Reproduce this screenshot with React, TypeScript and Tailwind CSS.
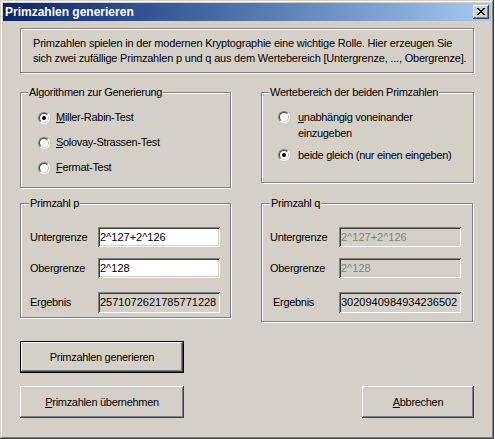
import React from "react";

const bevelRaised =
  "shadow-[inset_-1px_-1px_0_#404040,inset_1px_1px_0_#fff,inset_-2px_-2px_0_#808080,inset_2px_2px_0_#d4d0c8]";
const sunken =
  "shadow-[inset_1px_1px_0_#808080,inset_-1px_-1px_0_#fff,inset_2px_2px_0_#404040,inset_-2px_-2px_0_#d4d0c8]";
const etched = "border border-[#808080] shadow-[inset_1px_1px_0_#fff,1px_1px_0_#fff]";

function Radio({ checked }: { checked?: boolean }) {
  return (
    <span className="relative inline-block w-[12px] h-[12px] shrink-0 rounded-full border border-t-[#808080] border-l-[#808080] border-r-white border-b-white">
      <span className="absolute inset-0 rounded-full border border-t-[#404040] border-l-[#404040] border-r-[#d4d0c8] border-b-[#d4d0c8] bg-white flex items-center justify-center">
        {checked && <span className="w-[4px] h-[4px] rounded-full bg-black" />}
      </span>
    </span>
  );
}

function Group({
  label,
  className,
  labelLeft,
  children,
}: {
  label: string;
  className: string;
  labelLeft: string;
  children?: React.ReactNode;
}) {
  return (
    <div className={`relative ${etched} ${className}`}>
      <span
        className={`absolute top-[-7px] ${labelLeft} px-[1px] bg-[#d4d0c8] leading-[13px] tracking-[-0.3px]`}
      >
        {label}
      </span>
      {children}
    </div>
  );
}

function Field({
  value,
  disabled,
  readOnly,
  h,
}: {
  value: string;
  disabled?: boolean;
  readOnly?: boolean;
  h: string;
}) {
  const bg = disabled || readOnly ? "bg-[#d4d0c8]" : "bg-white";
  const color = disabled ? "text-[#808080]" : "text-black";
  return (
    <div
      className={`w-[122px] ${h} ${bg} ${color} ${sunken} flex items-center pl-[2px] pr-[2px] overflow-hidden whitespace-nowrap leading-[13px]`}
    >
      {value}
    </div>
  );
}

function Row({
  label,
  labelW,
  labelClass,
  children,
}: {
  label: string;
  labelW: string;
  labelClass?: string;
  children: React.ReactNode;
}) {
  return (
    <div className="flex items-center">
      <span className={`${labelW} shrink-0 tracking-[-0.3px] ${labelClass ?? ""}`}>{label}</span>
      {children}
    </div>
  );
}

function CloseGlyph() {
  const rows = [
    [0, 1, 6, 7],
    [1, 2, 5, 6],
    [2, 3, 4, 5],
    [3, 4],
    [2, 3, 4, 5],
    [1, 2, 5, 6],
    [0, 1, 6, 7],
  ];
  return (
    <svg width="8" height="7" viewBox="0 0 8 7" shapeRendering="crispEdges">
      {rows.map((cols, y) =>
        cols.map((x) => <rect key={`${x}-${y}`} x={x} y={y} width="1" height="1" fill="#000" />)
      )}
    </svg>
  );
}

export default function App() {
  return (
    <div
      className="w-[494px] h-[439px] bg-[#d4d0c8] text-black text-[11px] shadow-[inset_-1px_-1px_0_#404040,inset_1px_1px_0_#d4d0c8,inset_-2px_-2px_0_#808080,inset_2px_2px_0_#fff] flex flex-col"
      style={{ fontFamily: '"Liberation Sans", Arial, sans-serif' }}
    >
      {/* Title bar */}
      <div className="mx-[3px] mt-[3px] h-[18px] flex items-center justify-between bg-gradient-to-r from-[#0a246a] to-[#a6caf0]">
        <span className="pl-[2px] text-white font-bold text-[12px] leading-[18px]">
          Primzahlen generieren
        </span>
        <div
          className={`mr-[2px] w-[16px] h-[14px] bg-[#d4d0c8] flex items-center justify-center ${bevelRaised}`}
        >
          <span className="mt-[-1px] flex">
            <CloseGlyph />
          </span>
        </div>
      </div>

      {/* Content */}
      <div className="pl-[20px] pt-[7px] flex flex-col">
        <div className={`w-[454px] h-[45px] ${etched} pl-[12px] pt-[7px] leading-[15px] tracking-[-0.2px]`}>
          <div>Primzahlen spielen in der modernen Kryptographie eine wichtige Rolle. Hier erzeugen Sie</div>
          <div>sich zwei zufällige Primzahlen p und q aus dem Wertebereich [Untergrenze, ..., Obergrenze].</div>
        </div>

        <div className="mt-[19px] flex items-start gap-[30px]">
          <Group label="Algorithmen zur Generierung" className="w-[211px] h-[96px]" labelLeft="left-[7px]">
            <div className="pt-[12px] pl-[17px] flex flex-col">
              <div className="h-[25px] flex items-center gap-[6px]">
                <Radio checked />
                <span className="tracking-[-0.3px]">
                  <span className="underline">M</span>iller-Rabin-Test
                </span>
              </div>
              <div className="h-[25px] flex items-center gap-[6px]">
                <Radio />
                <span className="tracking-[-0.3px]">
                  <span className="underline">S</span>olovay-Strassen-Test
                </span>
              </div>
              <div className="h-[25px] flex items-center gap-[6px]">
                <Radio />
                <span className="tracking-[-0.3px]">
                  <span className="underline">F</span>ermat-Test
                </span>
              </div>
            </div>
          </Group>

          <Group label="Wertebereich der beiden Primzahlen" className="w-[213px] h-[91px]" labelLeft="left-[7px]">
            <div className="pt-[16px] pl-[16px] flex flex-col">
              <div className="flex items-start gap-[8px]">
                <span className="mt-[2px] flex">
                  <Radio />
                </span>
                <span className="leading-[16px] tracking-[-0.3px]">
                  <span className="underline">u</span>nabhängig voneinander
                  <br />
                  einzugeben
                </span>
              </div>
              <div className="mt-[6px] flex items-start gap-[8px]">
                <span className="mt-[2px] flex">
                  <Radio checked />
                </span>
                <span className="leading-[16px] tracking-[-0.3px]">beide gleich (nur einen eingeben)</span>
              </div>
            </div>
          </Group>
        </div>

        <div className="mt-[15px] flex items-start gap-[30px]">
          <Group label="Primzahl p" className="w-[211px] h-[115px]" labelLeft="left-[8px]">
            <div className="pt-[23px] pl-[9px] flex flex-col">
              <Row label="Untergrenze" labelW="w-[68px]">
                <Field value="2^127+2^126" h="h-[20px]" />
              </Row>
              <div className="mt-[11px]">
                <Row label="Obergrenze" labelW="w-[68px]">
                  <Field value="2^128" h="h-[20px]" />
                </Row>
              </div>
              <div className="mt-[14px]">
                <Row label="Ergebnis" labelW="w-[68px]">
                  <Field value="2571072621785771228" readOnly h="h-[21px]" />
                </Row>
              </div>
            </div>
          </Group>

          <Group label="Primzahl q" className="w-[212px] h-[119px]" labelLeft="left-[8px]">
            <div className="pt-[23px] pl-[8px] flex flex-col">
              <Row label="Untergrenze" labelW="w-[69px]">
                <Field value="2^127+2^126" disabled h="h-[20px]" />
              </Row>
              <div className="mt-[11px]">
                <Row label="Obergrenze" labelW="w-[69px]">
                  <Field value="2^128" disabled h="h-[20px]" />
                </Row>
              </div>
              <div className="mt-[14px]">
                <Row label="Ergebnis" labelW="w-[69px]" labelClass="pl-[3px]">
                  <Field value="3020940984934236502" readOnly h="h-[21px]" />
                </Row>
              </div>
            </div>
          </Group>
        </div>

        <div className="mt-[19px] w-[164px] h-[32px] border border-black">
          <div className={`w-full h-full flex items-center justify-center ${bevelRaised} tracking-[-0.3px]`}>
            <span>
              Primzahlen <span className="underline">g</span>enerieren
            </span>
          </div>
        </div>

        <div className="mt-[13px] w-[454px] flex justify-between">
          <div className={`w-[164px] h-[32px] flex items-center justify-center ${bevelRaised} tracking-[-0.3px]`}>
            <span>
              <span className="underline">P</span>rimzahlen übernehmen
            </span>
          </div>
          <div className={`w-[112px] h-[32px] flex items-center justify-center ${bevelRaised} tracking-[-0.3px]`}>
            <span>
              <span className="underline">A</span>bbrechen
            </span>
          </div>
        </div>
      </div>
    </div>
  );
}
